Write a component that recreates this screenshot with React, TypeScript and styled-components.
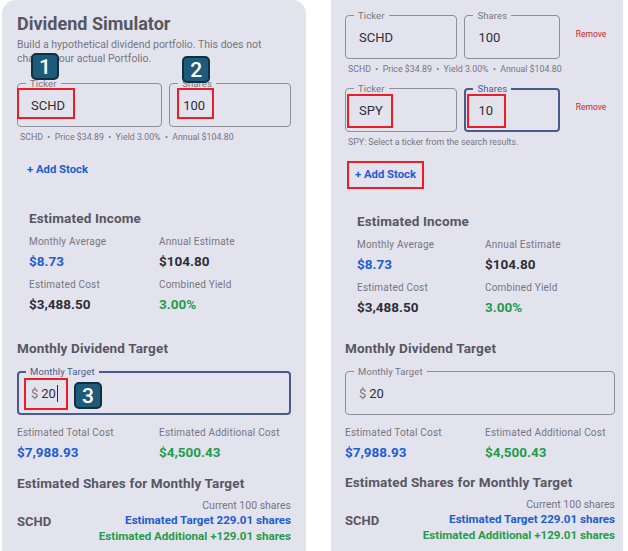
import React from "react";
import styled, { createGlobalStyle } from "styled-components";

const colors = {
  panel: "#e3e3ee",
  heading: "#575762",
  muted: "#767680",
  text: "#2e2e36",
  border: "#8f8f9a",
  focus: "#4a5a8c",
  blue: "#1d5cd2",
  green: "#1f9d4a",
  red: "#c62828",
  mark: "#ee1c24",
  badge: "#1e5a79",
};

type Tone = "blue" | "green" | "dark";

const toneColor = (tone: Tone) =>
  tone === "blue" ? colors.blue : tone === "green" ? colors.green : colors.text;

const GlobalStyle = createGlobalStyle`
  html, body {
    margin: 0;
    padding: 0;
    background: #ffffff;
  }
  body {
    font-family: Roboto, "Noto Sans", Arial, sans-serif;
  }
  * {
    box-sizing: border-box;
  }
`;

const Page = styled.div`
  display: flex;
  gap: 25px;
  padding-left: 2px;
  height: 551px;
  overflow: hidden;
`;

const Panel = styled.div<{ $width: number; $pad: string; $rounded?: boolean }>`
  width: ${(p) => p.$width}px;
  height: 551px;
  padding: ${(p) => p.$pad};
  background: ${colors.panel};
  border-radius: ${(p) => (p.$rounded ? "14px 14px 0 0" : "0")};
  display: flex;
  flex-direction: column;
  overflow: hidden;
  flex-shrink: 0;
`;

const Title = styled.h1`
  margin: 0;
  font-size: 18px;
  line-height: 24px;
  font-weight: 700;
  color: ${colors.heading};
`;

const Subtitle = styled.p`
  margin: 2px 0 17px;
  font-size: 10.5px;
  line-height: 14px;
  color: ${colors.muted};
`;

const Rows = styled.div`
  display: flex;
  flex-direction: column;
  gap: 13px;
`;

const StockRow = styled.div`
  display: flex;
  align-items: center;
  gap: 7px;
`;

const Field = styled.div<{ $focused?: boolean; $flex?: number }>`
  position: relative;
  flex: ${(p) => p.$flex ?? 1};
  min-width: 0;
  height: 44px;
  display: flex;
  align-items: center;
  padding: 0 ${(p) => (p.$focused ? 12 : 13)}px;
  border: ${(p) => (p.$focused ? 2 : 1)}px solid
    ${(p) => (p.$focused ? colors.focus : colors.border)};
  border-radius: 4px;
  font-size: 13px;
  color: ${colors.text};
`;

const FieldLabel = styled.span<{ $focused?: boolean }>`
  position: absolute;
  top: ${(p) => (p.$focused ? -7 : -6)}px;
  left: ${(p) => (p.$focused ? 7 : 8)}px;
  padding: 0 4px;
  font-size: 9.5px;
  line-height: 11px;
  letter-spacing: 0.1px;
  background: ${colors.panel};
  color: ${(p) => (p.$focused ? colors.focus : colors.muted)};
`;

const Prefix = styled.span`
  color: ${colors.muted};
  margin-right: 3px;
`;

const Caret = styled.span`
  display: inline-block;
  width: 1px;
  height: 17px;
  margin-left: 1px;
  background: ${colors.text};
`;

const RemoveButton = styled.button`
  width: 48px;
  margin-bottom: 6px;
  padding: 0;
  border: none;
  background: none;
  font-family: inherit;
  font-size: 8.5px;
  color: ${colors.red};
  text-align: center;
`;

const Helper = styled.div`
  margin: 5px 0 0 3px;
  font-size: 8.8px;
  line-height: 11px;
  color: ${colors.muted};
  white-space: pre;
`;

const AddButton = styled.button<{ $marked?: boolean }>`
  align-self: flex-start;
  margin: 15px 0 0 4px;
  padding: 5px 6px;
  border: none;
  background: none;
  font-family: inherit;
  font-size: 11.3px;
  line-height: 14px;
  font-weight: 700;
  color: ${colors.blue};
  outline: ${(p) => (p.$marked ? `2px solid ${colors.mark}` : "none")};
`;

const IncomeCard = styled.section<{ $gap: number }>`
  margin-top: ${(p) => p.$gap}px;
  padding: 12px;
`;

const SectionHeading = styled.h2<{ $gap?: number }>`
  margin: ${(p) => p.$gap ?? 0}px 0 0;
  font-size: 13.5px;
  line-height: 18px;
  font-weight: 700;
  letter-spacing: 0.15px;
  color: ${colors.heading};
`;

const StatGrid = styled.div<{ $gap: number }>`
  display: grid;
  grid-template-columns: 1fr 1fr;
  column-gap: 10px;
  row-gap: 8px;
  margin-top: ${(p) => p.$gap}px;
`;

const Stat = styled.div`
  display: flex;
  flex-direction: column;
  gap: 4px;
`;

const StatLabel = styled.span`
  font-size: 10px;
  line-height: 13px;
  letter-spacing: 0.2px;
  color: ${colors.muted};
`;

const StatValue = styled.span<{ $tone: Tone }>`
  font-size: 13.5px;
  line-height: 18px;
  font-weight: 700;
  color: ${(p) => toneColor(p.$tone)};
`;

const TargetWrap = styled.div<{ $gap: number }>`
  margin-top: ${(p) => p.$gap}px;
  display: flex;
`;

const ShareRow = styled.div`
  margin-top: 7px;
  display: flex;
  justify-content: space-between;
  align-items: center;
`;

const ShareTicker = styled.span`
  font-size: 13px;
  font-weight: 700;
  color: ${colors.heading};
`;

const ShareLines = styled.div`
  display: flex;
  flex-direction: column;
  align-items: flex-end;
`;

const ShareLine = styled.span<{ $tone?: Tone }>`
  font-size: ${(p) => (p.$tone ? 11.6 : 10.5)}px;
  line-height: ${(p) => (p.$tone ? 16 : 13)}px;
  font-weight: ${(p) => (p.$tone ? 700 : 400)};
  color: ${(p) => (p.$tone ? toneColor(p.$tone) : colors.muted)};
`;

const Badge = styled.span<{ $x: number; $y: number }>`
  position: absolute;
  left: ${(p) => p.$x}px;
  top: ${(p) => p.$y}px;
  width: 28px;
  height: 27px;
  display: flex;
  align-items: center;
  justify-content: center;
  border: 2px solid #10303f;
  border-radius: 5px;
  background: ${colors.badge};
  color: #ffffff;
  font-size: 21px;
  font-weight: 500;
  z-index: 2;
`;

const Mark = styled.span<{ $x: number; $y: number; $w: number; $h: number }>`
  position: absolute;
  left: ${(p) => p.$x}px;
  top: ${(p) => p.$y}px;
  width: ${(p) => p.$w}px;
  height: ${(p) => p.$h}px;
  border: 2px solid ${colors.mark};
  pointer-events: none;
`;

type Box = { x: number; y: number; w: number; h: number };

interface StockInput {
  ticker: string;
  shares: string;
  helper: string;
  sharesFocused?: boolean;
  tickerMark?: Box;
  sharesMark?: Box;
  tickerBadge?: { n: number; x: number; y: number };
  sharesBadge?: { n: number; x: number; y: number };
}

const StockEntry: React.FC<{ stock: StockInput; removable: boolean }> = ({
  stock,
  removable,
}) => (
  <div>
    <StockRow>
      <Field $flex={5}>
        <FieldLabel>Ticker</FieldLabel>
        {stock.ticker}
        {stock.tickerMark && (
          <Mark
            $x={stock.tickerMark.x}
            $y={stock.tickerMark.y}
            $w={stock.tickerMark.w}
            $h={stock.tickerMark.h}
          />
        )}
        {stock.tickerBadge && (
          <Badge $x={stock.tickerBadge.x} $y={stock.tickerBadge.y}>
            {stock.tickerBadge.n}
          </Badge>
        )}
      </Field>
      <Field $flex={4} $focused={stock.sharesFocused}>
        <FieldLabel $focused={stock.sharesFocused}>Shares</FieldLabel>
        {stock.shares}
        {stock.sharesMark && (
          <Mark
            $x={stock.sharesMark.x}
            $y={stock.sharesMark.y}
            $w={stock.sharesMark.w}
            $h={stock.sharesMark.h}
          />
        )}
        {stock.sharesBadge && (
          <Badge $x={stock.sharesBadge.x} $y={stock.sharesBadge.y}>
            {stock.sharesBadge.n}
          </Badge>
        )}
      </Field>
      {removable && <RemoveButton>Remove</RemoveButton>}
    </StockRow>
    <Helper>{stock.helper}</Helper>
  </div>
);

const schdHelper = "SCHD  •  Price $34.89  •  Yield 3.00%  •  Annual $104.80";

// the second screenshot is captured a touch smaller, so its gaps are tighter
const spacing = {
  normal: { card: 15, target: 14, field: 14, shares: 13 },
  tight: { card: 13, target: 11, field: 14, shares: 12 },
};

const Results: React.FC<{ targetFocused?: boolean; tight?: boolean }> = ({
  targetFocused,
  tight,
}) => {
  const gap = tight ? spacing.tight : spacing.normal;
  return (
    <>
      <IncomeCard $gap={gap.card}>
        <SectionHeading>Estimated Income</SectionHeading>
        <StatGrid $gap={8}>
          <Stat>
            <StatLabel>Monthly Average</StatLabel>
            <StatValue $tone="blue">$8.73</StatValue>
          </Stat>
          <Stat>
            <StatLabel>Annual Estimate</StatLabel>
            <StatValue $tone="dark">$104.80</StatValue>
          </Stat>
          <Stat>
            <StatLabel>Estimated Cost</StatLabel>
            <StatValue $tone="dark">$3,488.50</StatValue>
          </Stat>
          <Stat>
            <StatLabel>Combined Yield</StatLabel>
            <StatValue $tone="green">3.00%</StatValue>
          </Stat>
        </StatGrid>
      </IncomeCard>

      <SectionHeading $gap={gap.target}>Monthly Dividend Target</SectionHeading>
      <TargetWrap $gap={gap.field}>
        <Field $focused={targetFocused}>
          <FieldLabel $focused={targetFocused}>Monthly Target</FieldLabel>
          <Prefix>$</Prefix>
          20
          {targetFocused && <Caret />}
          {targetFocused && (
            <>
              <Mark $x={5} $y={5} $w={44} $h={32} />
              <Badge $x={55} $y={9}>
                3
              </Badge>
            </>
          )}
        </Field>
      </TargetWrap>

      <StatGrid $gap={11}>
        <Stat>
          <StatLabel>Estimated Total Cost</StatLabel>
          <StatValue $tone="blue">$7,988.93</StatValue>
        </Stat>
        <Stat>
          <StatLabel>Estimated Additional Cost</StatLabel>
          <StatValue $tone="green">$4,500.43</StatValue>
        </Stat>
      </StatGrid>

      <SectionHeading $gap={gap.shares}>
        Estimated Shares for Monthly Target
      </SectionHeading>
      <ShareRow>
        <ShareTicker>SCHD</ShareTicker>
        <ShareLines>
          <ShareLine>Current 100 shares</ShareLine>
          <ShareLine $tone="blue">Estimated Target 229.01 shares</ShareLine>
          <ShareLine $tone="green">Estimated Additional +129.01 shares</ShareLine>
        </ShareLines>
      </ShareRow>
    </>
  );
};

const firstStocks: StockInput[] = [
  {
    ticker: "SCHD",
    shares: "100",
    helper: schdHelper,
    tickerMark: { x: -1, y: 4, w: 58, h: 31 },
    sharesMark: { x: 7, y: 4, w: 37, h: 31 },
    tickerBadge: { n: 1, x: 13, y: -31 },
    sharesBadge: { n: 2, x: 12, y: -28 },
  },
];

const secondStocks: StockInput[] = [
  { ticker: "SCHD", shares: "100", helper: schdHelper },
  {
    ticker: "SPY",
    shares: "10",
    helper: "SPY: Select a ticker from the search results.",
    sharesFocused: true,
    tickerMark: { x: 1, y: 5, w: 46, h: 34 },
    sharesMark: { x: 1, y: 4, w: 39, h: 34 },
  },
];

export default function App() {
  return (
    <>
      <GlobalStyle />
      <Page>
        <Panel $width={304} $pad="12px 15px 0" $rounded>
          <Title>Dividend Simulator</Title>
          <Subtitle>
            Build a hypothetical dividend portfolio. This does not change your
            actual Portfolio.
          </Subtitle>
          <Rows>
            {firstStocks.map((s, i) => (
              <StockEntry key={i} stock={s} removable={false} />
            ))}
          </Rows>
          <AddButton>+ Add Stock</AddButton>
          <Results targetFocused />
        </Panel>

        <Panel $width={292} $pad="15px 8px 0 14px">
          <Rows>
            {secondStocks.map((s, i) => (
              <StockEntry key={i} stock={s} removable />
            ))}
          </Rows>
          <AddButton $marked>+ Add Stock</AddButton>
          <Results tight />
        </Panel>
      </Page>
    </>
  );
}
